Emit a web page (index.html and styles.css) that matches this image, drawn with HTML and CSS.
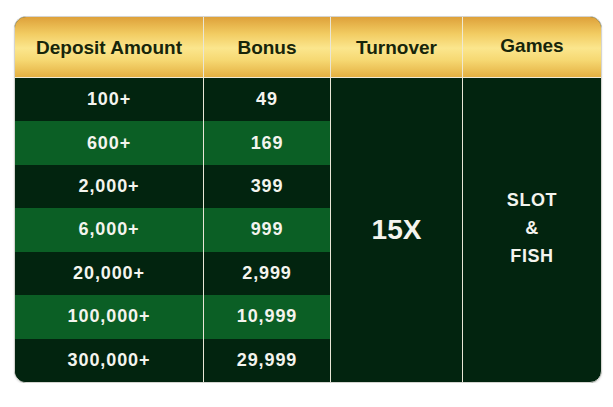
FILE: index.html
```html
<!DOCTYPE html>
<html>
<head>
<meta charset="utf-8">
<link rel="stylesheet" href="styles.css">
</head>
<body>
<div class="wrap">
  <div class="table">
    <div class="hd c1">Deposit Amount</div>
    <div class="hd c2">Bonus</div>
    <div class="hd c3">Turnover</div>
    <div class="hd c4 games">Games</div>

    <div class="cell c1 dark">100+</div>
    <div class="cell c2 dark">49</div>
    <div class="merged turn">15X</div>
    <div class="merged games-body"><span>SLOT</span><span>&amp;</span><span>FISH</span></div>

    <div class="cell c1 green">600+</div>
    <div class="cell c2 green">169</div>
    <div class="cell c1 dark">2,000+</div>
    <div class="cell c2 dark">399</div>
    <div class="cell c1 green">6,000+</div>
    <div class="cell c2 green">999</div>
    <div class="cell c1 dark">20,000+</div>
    <div class="cell c2 dark">2,999</div>
    <div class="cell c1 green">100,000+</div>
    <div class="cell c2 green">10,999</div>
    <div class="cell c1 dark">300,000+</div>
    <div class="cell c2 dark">29,999</div>
  </div>
</div>
</body>
</html>
```

FILE: styles.css
```css
html, body {
  margin: 0;
  padding: 0;
  background: #ffffff;
}
.wrap {
  padding: 16px 0 0 14px;
}
.table {
  width: 586px;
  height: 365px;
  border: 1px solid #d4d4d0;
  border-radius: 12px;
  overflow: hidden;
  display: grid;
  grid-template-columns: 189px 127px 132px 1fr;
  grid-template-rows: 61px repeat(7, 1fr);
  background: #02240f;
  font-family: "Liberation Sans", Arial, sans-serif;
  box-shadow: 0 1px 2px rgba(0,0,0,0.12);
}
.hd {
  display: flex;
  align-items: center;
  justify-content: center;
  background: linear-gradient(#dea13a 0%, #f2cc62 28%, #fbe68d 52%, #f6d872 72%, #e4b042 100%);
  color: #17250a;
  font-size: 19px;
  font-weight: bold;
  border-bottom: 1px solid #efe9d2;
  border-right: 1px solid #efe9d2;
  padding-top: 2px;
}
.hd.games {
  border-right: none;
  padding-top: 0;
  padding-bottom: 3px;
}
.cell {
  display: flex;
  align-items: center;
  justify-content: center;
  color: #f4f4ee;
  font-size: 18px;
  font-weight: bold;
  letter-spacing: 0.9px;
}
.c1, .c2 {
  border-right: 1px solid #e9e6d6;
}
.dark {
  background: #02240f;
}
.green {
  background: #0b5f25;
}
.merged {
  grid-row: 2 / span 7;
  display: flex;
  align-items: center;
  justify-content: center;
  color: #f4f4ee;
  font-weight: bold;
}
.turn {
  grid-column: 3;
  font-size: 28px;
  border-right: 1px solid #e9e6d6;
}
.games-body {
  grid-column: 4;
  flex-direction: column;
  font-size: 18px;
  line-height: 28px;
  letter-spacing: 0.6px;
  padding-bottom: 4px;
}
```
